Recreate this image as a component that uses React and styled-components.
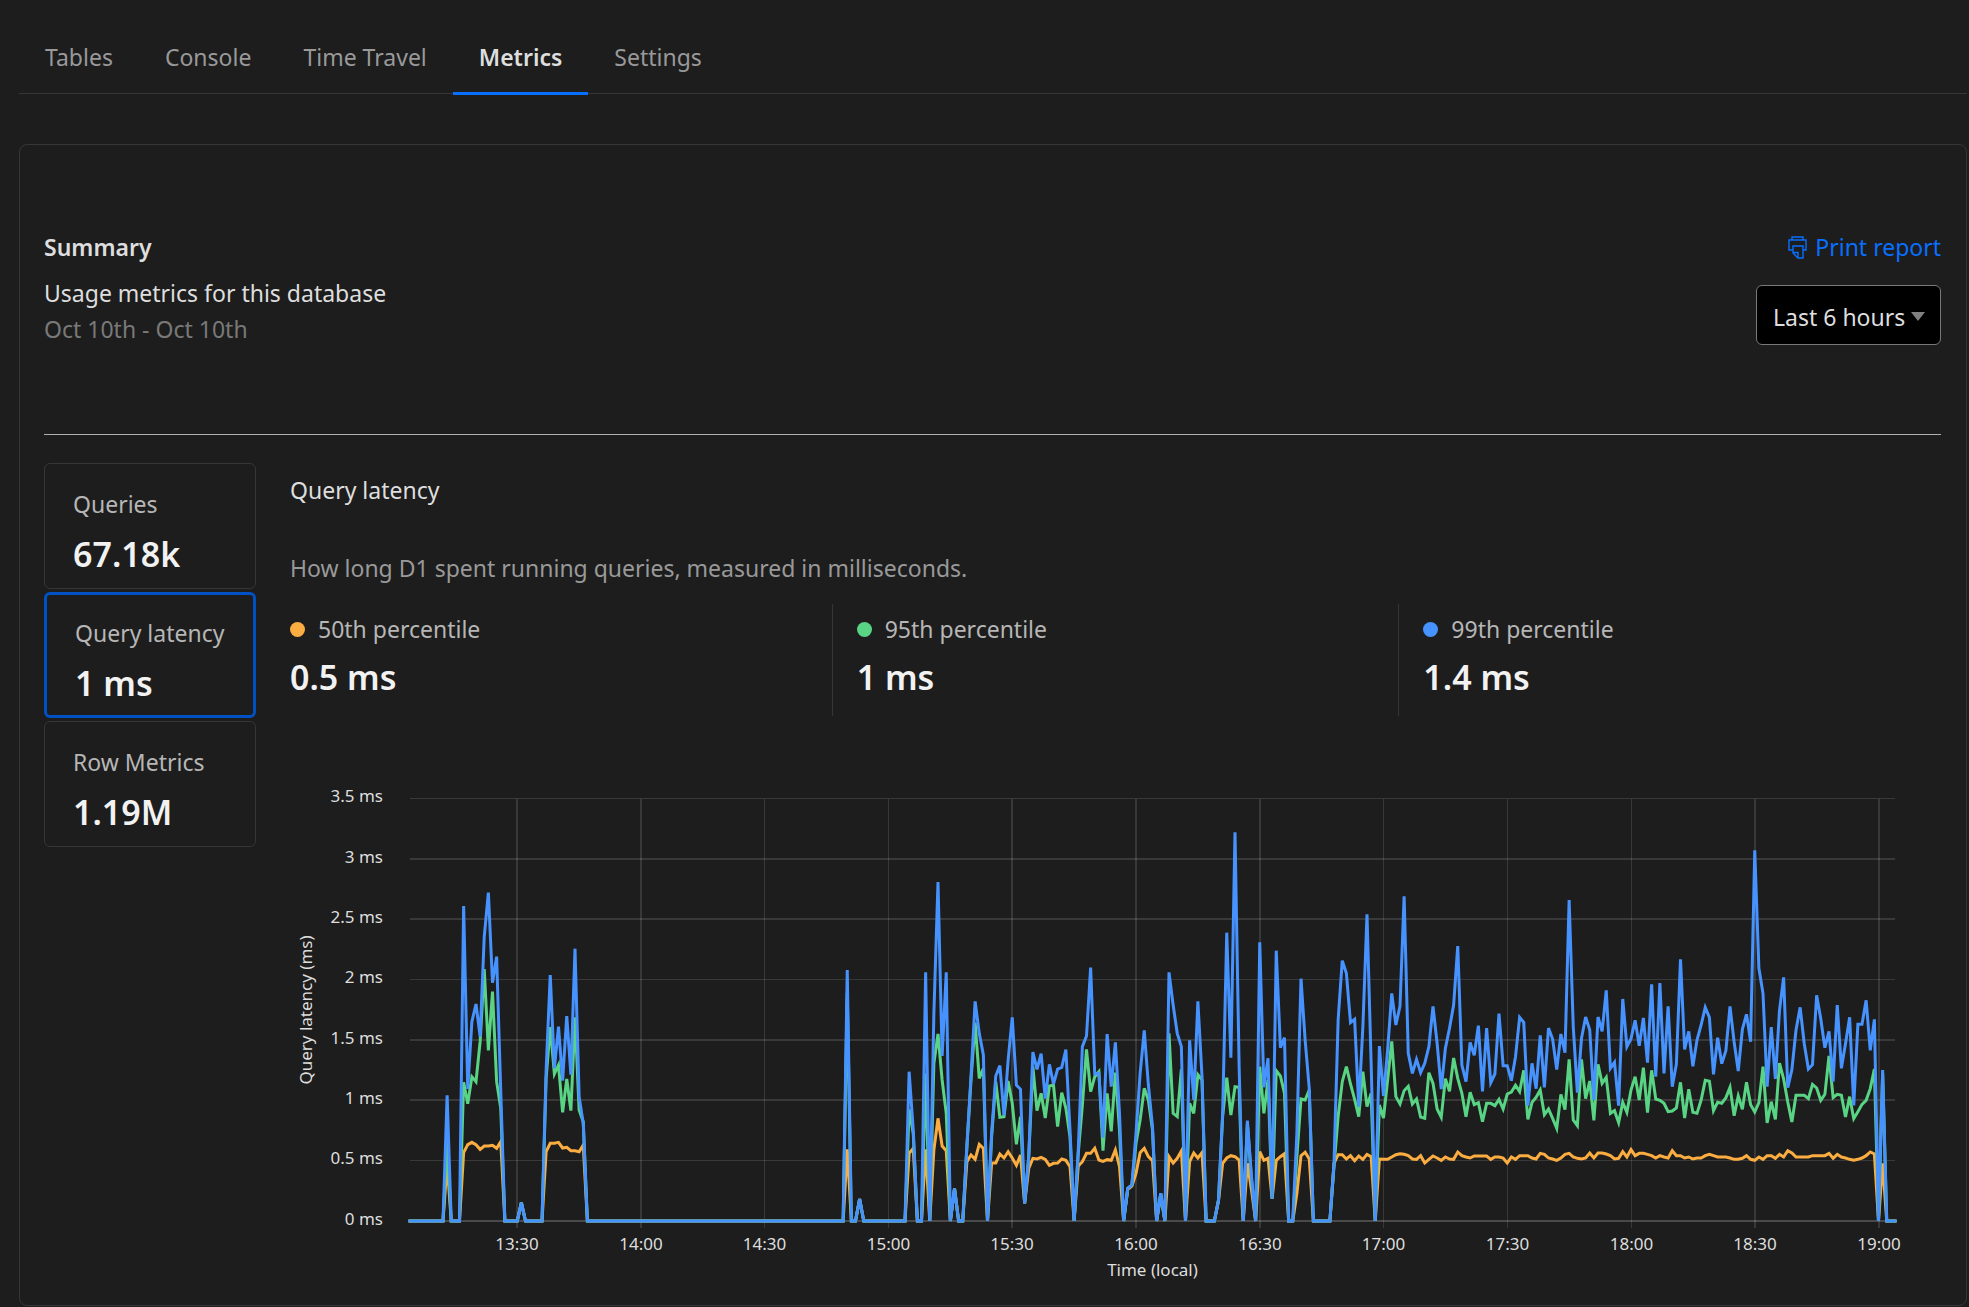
import React, { useLayoutEffect, useRef, useState } from "react";
import styled, { createGlobalStyle } from "styled-components";

const color = {
  page: "#1d1d1d",
  line: "#363636",
  rule: "#b0b0b0",
  strong: "#f2f2f2",
  text: "#dedede",
  label: "#b6b6b6",
  muted: "#999999",
  faint: "#797979",
  link: "#086fff",
  selected: "#0051c3",
  p50: "#fbad41",
  p95: "#58d484",
  p99: "#4693ff",
};

const font = `"Noto Sans", "Open Sans", "Liberation Sans", sans-serif`;

const GlobalStyle = createGlobalStyle`
  *, *::before, *::after { box-sizing: border-box; }
  body {
    margin: 0;
    background: ${color.page};
    color: ${color.text};
    font-family: ${font};
    font-size: 23px;
    line-height: 36px;
  }
  button, select { font: inherit; color: inherit; }
  h1, h2, p, dl, dt, dd { margin: 0; font: inherit; }
`;

const Page = styled.main`
  padding: 0 2px 0 19px;
`;

const TabBar = styled.nav`
  display: flex;
  border-bottom: 1px solid ${color.line};
`;

const Tab = styled.button`
  margin: 0 0 -2px;
  padding: 39px 26px 17px;
  border: 0;
  border-bottom: 3px solid ${(p) => (p.$active ? color.link : "transparent")};
  background: none;
  color: ${(p) => (p.$active ? color.text : color.muted)};
  font-weight: ${(p) => (p.$active ? 600 : 400)};
  cursor: pointer;
`;

const Panel = styled.section`
  margin-top: 50px;
  padding: 84px 25px 20px 24px;
  border: 1px solid ${color.line};
  border-radius: 8px;
`;

const Header = styled.header`
  display: flex;
  justify-content: space-between;
  align-items: flex-start;
  padding-bottom: 87px;
  border-bottom: 1px solid ${color.rule};
`;

const Title = styled.h1`
  && {
    margin-bottom: 10px;
    font-weight: 600;
  }
`;

const DateRange = styled.p`
  color: ${color.faint};
`;

const Actions = styled.div`
  display: flex;
  flex-direction: column;
  align-items: flex-end;
  gap: 20px;
`;

const PrintButton = styled.button`
  display: flex;
  align-items: center;
  gap: 8px;
  padding: 0;
  border: 0;
  background: none;
  color: ${color.link};
  cursor: pointer;
`;

const SelectBox = styled.label`
  display: grid;
  align-items: center;

  > * { grid-area: 1 / 1; }
  > svg {
    justify-self: end;
    margin: 3px 16px 0 0;
    pointer-events: none;
  }
`;

const Select = styled.select`
  appearance: none;
  height: 60px;
  padding: 4px 34px 0 16px;
  border: 1px solid ${color.faint};
  border-radius: 6px;
  background: #000;
`;

const Body = styled.div`
  display: flex;
  gap: 34px;
  padding-top: 28px;
`;

const MetricList = styled.div`
  display: flex;
  flex: 0 0 212px;
  flex-direction: column;
  gap: 3px;
`;

const MetricCard = styled.button`
  display: flex;
  flex-direction: column;
  gap: 8px;
  height: 126px;
  padding: ${(p) => (p.$active ? "20px 0 0 28px" : "22px 0 0 28px")};
  border: ${(p) => (p.$active ? `3px solid ${color.selected}` : `1px solid ${color.line}`)};
  border-radius: 6px;
  background: none;
  text-align: left;
  white-space: nowrap;
  cursor: pointer;
`;

const Label = styled.span`
  color: ${color.label};
`;

const Value = styled.span`
  color: ${color.strong};
  font-size: 34px;
  font-weight: 600;
  line-height: 48px;
`;

const Detail = styled.div`
  flex: 1;
  min-width: 0;
  padding-top: 9px;
`;

const Description = styled.p`
  && { margin: 42px 0 18px; }
  color: ${color.muted};
`;

const Percentiles = styled.dl`
  display: flex;
`;

const Percentile = styled.div`
  flex: 1 1 0;
  padding: 7px 24px 15px;

  & + & { border-left: 1px solid ${color.line}; }
  &:first-child { padding-left: 0; }
  &:last-child { padding-right: 0; }
`;

const PercentileName = styled.dt`
  display: flex;
  align-items: center;
  gap: 13px;
  color: ${color.label};

  &::before {
    content: "";
    width: 15px;
    height: 15px;
    border-radius: 50%;
    background: ${(p) => p.$color};
  }
`;

const PercentileValue = styled.dd`
  && {
    margin-top: 6px;
    color: ${color.strong};
    font-size: 34px;
    font-weight: 600;
    line-height: 48px;
  }
`;

const ChartFrame = styled.figure`
  margin: 64px 0 0;
`;

const ChartSvg = styled.svg`
  display: block;
  width: 100%;
  height: 505px;
  overflow: visible;

  text {
    fill: ${color.text};
    font-size: 17px;
  }
`;

const ZERO = 1323;
const UNITS_PER_PX = 3;
const none = (n) => Array(n).fill(ZERO);

/* One sample a minute from 13:04 to 19:04, as depth below the top of the
   chart in thirds of a pixel; 1323 is the 0 ms line. */
const p99 = [
  ...none(9), 946, ...none(3), 378, 927, 725, 672, 770, 470, 338, 608, 530, 935, ...none(4), 1268,
  ...none(5), 870, 585, 865, 740, 902, 708, 884, 506, 950, 1030, ...none(63),
  570, ...none(2), 1257, ...none(11), 875, 1050, ...none(2), 577, 1323, 700, 306, 828,
  577, 1323, 1225, 1323, 1323, 1100, 890, 664, 760, 825,
  1323, 1060, 888, 857, 1006, 840, 712, 915, 928, 1270,
  1130, 816, 868, 821, 956, 853, 912, 867, 862, 809,
  1050, 1323, 1110, 800, 768, 563, 882, 880, 1073, 762,
  920, 787, 1000, 1323, 1225, 1215, 1060, 880, 751, 915,
  1040, 1323, 1240, 1323, 577, 675, 760, 800, 1323, 781,
  960, 664, 890, 1323, 1323, 1323, 1260, 1000, 458, 833,
  157, 860, 1323, 1022, 1190, 1323, 487, 922, 835, 1256,
  512, 803, 773, 1323, 1323, 1060, 596, 780, 925, 1323,
  1323, 1323, 1323, 1323, 1150, 720, 542, 580, 728, 718,
  980, 740, 403, 850, 1323, 798, 948, 810, 640, 735,
  678, 349, 820, 880, 838, 878, 850, 800, 679, 790,
  927, 805, 745, 675, 498, 855, 905, 787, 826, 737,
  934, 744, 908, 882, 701, 857, 857, 902, 830, 712,
  727, 977, 850, 926, 766, 922, 744, 777, 869, 762,
  818, 360, 740, 938, 775, 711, 750, 960, 711, 754,
  631, 865, 847, 977, 657, 800, 776, 721, 797, 714,
  848, 613, 890, 609, 880, 679, 920, 852, 538, 808,
  754, 859, 780, 735, 682, 712, 883, 773, 851, 812,
  679, 786, 873, 748, 703, 785, 211, 565, 640, 920,
  741, 897, 691, 592, 923, 869, 751, 682, 791, 867,
  854, 646, 716, 803, 754, 905, 675, 865, 791, 712,
  976, 733, 733, 661, 811, 718, 1323, 870, 1323, 1323, 1323,
];

const p95 = [
  ...none(9), 1080, ...none(3), 907, 971, 890, 905, 785, 567, 811, 635, 905, 985, ...none(4), 1268,
  ...none(5), 895, 741, 882, 855, 997, 897, 992, 712, 990, 1025, ...none(63),
  640, ...none(2), 1257, ...none(11), 988, 1060, ...none(2), 880, 1323, 850, 762, 900,
  1000, 1323, 1225, 1323, 1323, 1100, 900, 728, 895, 865,
  1323, 1070, 905, 1012, 1010, 903, 970, 1093, 1010, 1270,
  1130, 860, 992, 940, 1014, 918, 915, 1040, 938, 985,
  1070, 1323, 1120, 975, 808, 935, 890, 875, 1112, 940,
  1054, 878, 1050, 1323, 1225, 1215, 1090, 1020, 925, 960,
  1050, 1323, 1240, 1323, 760, 1000, 1010, 868, 1323, 970,
  1000, 884, 900, 1323, 1323, 1323, 1260, 1010, 893, 1005,
  920, 922, 1323, 1030, 1200, 1323, 860, 1000, 900, 1256,
  872, 888, 940, 1323, 1323, 1130, 957, 960, 930, 1323,
  1323, 1323, 1323, 1323, 1160, 1010, 905, 860, 912, 958,
  1010, 875, 980, 940, 1323, 975, 1014, 900, 784, 950,
  972, 932, 919, 972, 957, 1011, 1015, 878, 910, 987,
  1012, 896, 934, 834, 895, 940, 1010, 937, 974, 968,
  1025, 970, 970, 977, 958, 987, 942, 936, 916, 935,
  871, 1018, 967, 952, 930, 1004, 987, 1015, 1045, 943,
  989, 838, 1020, 1037, 838, 956, 903, 1021, 853, 910,
  892, 1000, 992, 1028, 967, 997, 930, 890, 960, 863,
  998, 871, 957, 961, 970, 995, 993, 984, 907, 1014,
  928, 997, 1000, 960, 901, 904, 992, 967, 970, 953,
  922, 1007, 948, 988, 907, 974, 996, 968, 860, 1029,
  965, 1018, 849, 897, 966, 1026, 946, 946, 946, 956,
  913, 924, 961, 943, 828, 953, 943, 946, 1011, 950,
  1016, 995, 973, 961, 926, 867, 1323, 880, 1323, 1323, 1323,
];

const p50 = [
  ...none(9), 1150, ...none(3), 1118, 1094, 1087, 1094, 1108, 1098, 1098, 1096, 1105, 1085, ...none(4), 1268,
  ...none(5), 1115, 1090, 1090, 1087, 1104, 1102, 1112, 1112, 1115, 1095, ...none(63),
  1108, ...none(2), 1257, ...none(11), 1120, 1105, ...none(2), 1108, 1323, 1110, 1015, 1098,
  1112, 1323, 1225, 1323, 1323, 1145, 1125, 1138, 1093, 1105,
  1323, 1149, 1149, 1122, 1134, 1115, 1134, 1156, 1125, 1270,
  1165, 1135, 1137, 1132, 1138, 1156, 1150, 1149, 1137, 1141,
  1160, 1323, 1158, 1145, 1120, 1120, 1105, 1140, 1144, 1139,
  1141, 1110, 1160, 1323, 1228, 1218, 1180, 1118, 1105, 1130,
  1142, 1323, 1245, 1323, 1130, 1149, 1135, 1113, 1323, 1145,
  1119, 1134, 1118, 1323, 1323, 1323, 1262, 1150, 1134, 1127,
  1130, 1140, 1323, 1150, 1230, 1323, 1115, 1141, 1135, 1256,
  1141, 1130, 1121, 1323, 1323, 1240, 1127, 1117, 1137, 1323,
  1323, 1323, 1323, 1323, 1150, 1124, 1124, 1137, 1127, 1142,
  1128, 1138, 1123, 1130, 1323, 1137, 1138, 1138, 1131, 1124,
  1121, 1123, 1127, 1137, 1138, 1127, 1149, 1138, 1128, 1134,
  1141, 1131, 1137, 1138, 1116, 1127, 1131, 1134, 1128, 1128,
  1128, 1128, 1138, 1131, 1131, 1134, 1149, 1131, 1138, 1127,
  1127, 1127, 1134, 1137, 1120, 1123, 1134, 1137, 1141, 1134,
  1123, 1120, 1131, 1135, 1137, 1134, 1119, 1134, 1119, 1119,
  1122, 1127, 1137, 1135, 1115, 1131, 1109, 1127, 1120, 1120,
  1123, 1127, 1134, 1127, 1131, 1134, 1112, 1127, 1127, 1134,
  1131, 1137, 1134, 1134, 1127, 1123, 1127, 1131, 1131, 1131,
  1134, 1138, 1138, 1135, 1127, 1138, 1141, 1131, 1138, 1127,
  1127, 1135, 1123, 1131, 1112, 1119, 1131, 1131, 1131, 1131,
  1127, 1127, 1127, 1127, 1120, 1135, 1123, 1131, 1134, 1138,
  1141, 1138, 1134, 1127, 1116, 1122, 1323, 1150, 1323, 1323, 1323,
];

const MINUTES = 360;
const MARGIN = { left: 120, right: 46, top: 19, base: 441 };

const yTicks = [
  { label: "3.5 ms", y: 18, thin: true },
  { label: "3 ms", y: 79 },
  { label: "2.5 ms", y: 139 },
  { label: "2 ms", y: 199, thin: true },
  { label: "1.5 ms", y: 260 },
  { label: "1 ms", y: 320 },
  { label: "0.5 ms", y: 380, thin: true },
  { label: "0 ms", y: 441, axis: true },
];

const xTicks = [
  { label: "13:30", minute: 26 },
  { label: "14:00", minute: 56 },
  { label: "14:30", minute: 86, thin: true },
  { label: "15:00", minute: 116, thin: true },
  { label: "15:30", minute: 146 },
  { label: "16:00", minute: 176 },
  { label: "16:30", minute: 206 },
  { label: "17:00", minute: 236, thin: true },
  { label: "17:30", minute: 266, thin: true },
  { label: "18:00", minute: 296, thin: true },
  { label: "18:30", minute: 326 },
  { label: "19:00", minute: 356 },
];

function LatencyChart() {
  const ref = useRef(null);
  const [width, setWidth] = useState(1651);

  useLayoutEffect(() => {
    const measure = () => setWidth(ref.current.clientWidth);
    measure();
    const observer = new ResizeObserver(measure);
    observer.observe(ref.current);
    return () => observer.disconnect();
  }, []);

  const right = width - MARGIN.right;
  const x = (minute) => MARGIN.left + (minute * (right - MARGIN.left)) / MINUTES;
  const line = (series) =>
    series.map((d, i) => `${x(i).toFixed(2)},${(d / UNITS_PER_PX).toFixed(2)}`).join(" ");
  const middleY = (MARGIN.top + MARGIN.base) / 2;

  return (
    <ChartFrame ref={ref}>
      <ChartSvg role="img" aria-label="Query latency over time">
        {yTicks.map((t) => (
          <g key={t.label}>
            <line
              x1={MARGIN.left}
              x2={right}
              y1={t.thin ? t.y + 0.5 : t.y}
              y2={t.thin ? t.y + 0.5 : t.y}
              stroke={t.axis ? "#4a4a4a" : "#393939"}
              strokeWidth={t.thin ? 1 : 2}
            />
            <text x="93" y={t.y + 4} textAnchor="end">{t.label}</text>
          </g>
        ))}
        {xTicks.map((t) => {
          const at = t.thin ? Math.floor(x(t.minute)) + 0.5 : Math.round(x(t.minute));
          return (
            <g key={t.label}>
              <line
                x1={at}
                x2={at}
                y1={MARGIN.top}
                y2={MARGIN.base + 7}
                stroke="#fff"
                strokeOpacity="0.12"
                strokeWidth={t.thin ? 1 : 2}
              />
              <text x={at} y={MARGIN.base + 29} textAnchor="middle">{t.label}</text>
            </g>
          );
        })}
        <g fill="none" strokeWidth="3" strokeLinejoin="miter" strokeMiterlimit="4" strokeLinecap="square">
          <polyline points={line(p50)} stroke={color.p50} />
          <polyline points={line(p95)} stroke={color.p95} />
          <polyline points={line(p99)} stroke={color.p99} />
        </g>
        <text x={(MARGIN.left + right) / 2} y={MARGIN.base + 55} textAnchor="middle">
          Time (local)
        </text>
        <text transform={`translate(22 ${middleY}) rotate(-90)`} textAnchor="middle">
          Query latency (ms)
        </text>
      </ChartSvg>
    </ChartFrame>
  );
}

const PrintIcon = () => (
  <svg width="19" height="23" viewBox="0 0 19 23" fill="none" stroke="currentColor" strokeWidth="1.4" aria-hidden="true">
    <path d="M4 4V1h11v3M5 14H1V4h17v10h-3" />
    <path d="M5 10h10v12h-5L5 17zM5 16.500h5V22" />
  </svg>
);

const tabs = ["Tables", "Console", "Time Travel", "Metrics", "Settings"];

const metrics = [
  { name: "Queries", value: "67.18k" },
  { name: "Query latency", value: "1 ms" },
  { name: "Row Metrics", value: "1.19M" },
];

const percentiles = [
  { name: "50th percentile", value: "0.5 ms", color: color.p50 },
  { name: "95th percentile", value: "1 ms", color: color.p95 },
  { name: "99th percentile", value: "1.4 ms", color: color.p99 },
];

export default function App() {
  const [tab, setTab] = useState("Metrics");
  const [metric, setMetric] = useState("Query latency");

  return (
    <>
      <GlobalStyle />
      <Page>
        <TabBar>
          {tabs.map((name) => (
            <Tab key={name} type="button" $active={name === tab} onClick={() => setTab(name)}>
              {name}
            </Tab>
          ))}
        </TabBar>
        <Panel>
          <Header>
            <div>
              <Title>Summary</Title>
              <p>Usage metrics for this database</p>
              <DateRange>Oct 10th - Oct 10th</DateRange>
            </div>
            <Actions>
              <PrintButton type="button">
                <PrintIcon />
                Print report
              </PrintButton>
              <SelectBox>
                <Select aria-label="Time range" defaultValue="Last 6 hours">
                  <option>Last 6 hours</option>
                </Select>
                <svg width="14" height="9" viewBox="0 0 14 9" aria-hidden="true">
                  <path d="M0 0h14L7 9z" fill="#808080" />
                </svg>
              </SelectBox>
            </Actions>
          </Header>
          <Body>
            <MetricList>
              {metrics.map((m) => (
                <MetricCard
                  key={m.name}
                  type="button"
                  $active={m.name === metric}
                  onClick={() => setMetric(m.name)}
                >
                  <Label>{m.name}</Label>
                  <Value>{m.value}</Value>
                </MetricCard>
              ))}
            </MetricList>
            <Detail>
              <h2>Query latency</h2>
              <Description>How long D1 spent running queries, measured in milliseconds.</Description>
              <Percentiles>
                {percentiles.map((p) => (
                  <Percentile key={p.name}>
                    <PercentileName $color={p.color}>{p.name}</PercentileName>
                    <PercentileValue>{p.value}</PercentileValue>
                  </Percentile>
                ))}
              </Percentiles>
              <LatencyChart />
            </Detail>
          </Body>
        </Panel>
      </Page>
    </>
  );
}
